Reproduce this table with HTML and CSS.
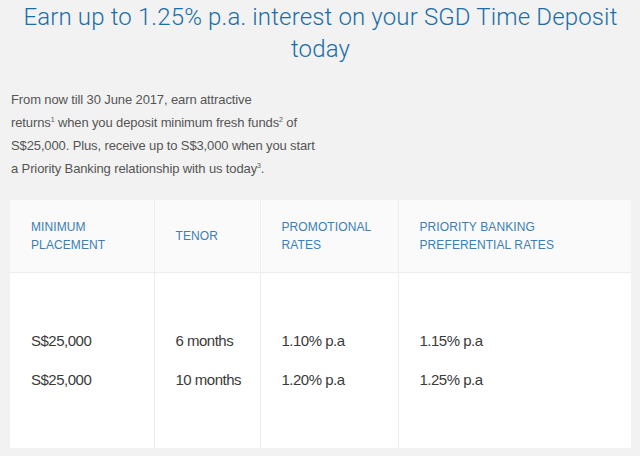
FILE: index.html
```html
<!DOCTYPE html>
<html>
<head>
<meta charset="utf-8">
<link rel="stylesheet" href="styles.css">
</head>
<body>
<div class="page">
  <h1 class="title">Earn up to 1.25% p.a. interest on your SGD Time Deposit today</h1>
  <p class="intro">From now till 30 June 2017, earn attractive<br>returns<sup>1</sup> when you deposit minimum fresh funds<sup>2</sup> of<br>S$25,000. Plus, receive up to S$3,000 when you start<br>a Priority Banking relationship with us today<sup>3</sup>.</p>
  <table class="rates">
    <thead>
      <tr>
        <th class="c1">Minimum<br>Placement</th>
        <th class="c2">Tenor</th>
        <th class="c3">Promotional<br>Rates</th>
        <th class="c4">Priority Banking<br>Preferential Rates</th>
      </tr>
    </thead>
    <tbody>
      <tr class="first">
        <td>S$25,000</td>
        <td>6 months</td>
        <td>1.10% p.a</td>
        <td>1.15% p.a</td>
      </tr>
      <tr class="last">
        <td>S$25,000</td>
        <td>10 months</td>
        <td>1.20% p.a</td>
        <td>1.25% p.a</td>
      </tr>
    </tbody>
  </table>
</div>
</body>
</html>
```

FILE: styles.css
```css
html, body {
  margin: 0;
  padding: 0;
  background: #f2f2f2;
}
.page {
  padding: 1px 9px 0 10px;
}
.title {
  max-width: 600px;
  margin: 0 auto 23px;
  font-family: Roboto, "Liberation Sans", sans-serif;
  font-weight: 300;
  font-size: 24px;
  line-height: 32px;
  letter-spacing: 0.15px;
  color: #1b6ea5;
  text-align: center;
}
.intro {
  margin: 0 0 20px 1px;
  width: 330px;
  font-family: "Liberation Sans", Arial, sans-serif;
  font-size: 13px;
  line-height: 23px;
  letter-spacing: -0.12px;
  color: #555;
}
.intro sup {
  font-size: 7px;
  line-height: 0;
  vertical-align: 5px;
}
.rates {
  width: 621px;
  border-collapse: collapse;
  background: #fff;
  font-family: "Liberation Sans", Arial, sans-serif;
}
.rates th {
  height: 72px;
  padding: 0 0 0 21px;
  box-sizing: border-box;
  background: #fafafa;
  text-align: left;
  font-weight: normal;
  font-size: 12px;
  line-height: 18px;
  letter-spacing: 0.1px;
  text-transform: uppercase;
  color: #3b7fb4;
  border-bottom: 1px solid #ededed;
  border-left: 1px solid #ededed;
}
.rates th:first-child, .rates td:first-child {
  border-left: none;
}
.rates .c1 { width: 144px; }
.rates .c2 { width: 106px; }
.rates .c3 { width: 138px; }
.rates td {
  padding: 10px 0 9px 21px;
  font-size: 15px;
  line-height: 20px;
  letter-spacing: -0.5px;
  color: #3a3a3a;
  border-left: 1px solid #ededed;
}
.rates .first td { padding-top: 58px; }
.rates .last td { padding-bottom: 58px; }
```
